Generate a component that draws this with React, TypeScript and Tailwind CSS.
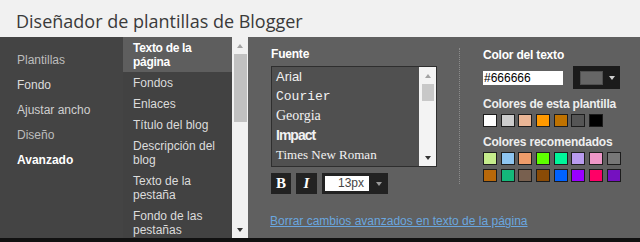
const templateColors = [
  "bg-[#ffffff]",
  "bg-[#cccccc]",
  "bg-[#eab696]",
  "bg-[#ff9900]",
  "bg-[#bf7200]",
  "bg-[#555555]",
  "bg-[#000000]",
];

const recRow1 = [
  "bg-[#c6ec8c]",
  "bg-[#8ec5f0]",
  "bg-[#ee9c6a]",
  "bg-[#5eff00]",
  "bg-[#00f59a]",
  "bg-[#b99bee]",
  "bg-[#ef97c8]",
  "bg-[#777777]",
];

const recRow2 = [
  "bg-[#b8680a]",
  "bg-[#14b87a]",
  "bg-[#78604f]",
  "bg-[#8a4b06]",
  "bg-[#0062ff]",
  "bg-[#9a00ff]",
  "bg-[#ff0066]",
  "bg-[#7511c0]",
];

function Swatch({ c }: { c: string }) {
  return <div className={`w-[14px] h-[13px] border border-[#1c1c1c] ${c}`} />;
}

function UpArrow({ color }: { color: string }) {
  return (
    <div
      className={`w-0 h-0 border-x-[3.5px] border-x-transparent border-b-[4px] ${color}`}
    />
  );
}

function DownArrow({ color }: { color: string }) {
  return (
    <div
      className={`w-0 h-0 border-x-[3.5px] border-x-transparent border-t-[4px] ${color}`}
    />
  );
}

export default function App() {
  const nav = [
    { t: "Plantillas", c: "text-[#bdbdbd]" },
    { t: "Fondo", c: "text-[#dddddd]" },
    { t: "Ajustar ancho", c: "text-[#cfcfcf]" },
    { t: "Diseño", c: "text-[#bdbdbd]" },
  ];
  const sub = [
    ["Fondos"],
    ["Enlaces"],
    ["Título del blog"],
    ["Descripción del", "blog"],
    ["Texto de la", "pestaña"],
    ["Fondo de las", "pestañas"],
  ];
  return (
    <div className="w-[640px] h-[242px] flex flex-col overflow-hidden font-['Liberation_Sans',Arial,sans-serif] text-[12px]">
      <header className="h-[37px] shrink-0 bg-[#f1f1f1] flex items-center pl-[16px] pt-[4px]">
        <h1 className="font-['Open_Sans',sans-serif] text-[18px] text-[#3a3a3a] leading-none">
          Diseñador de plantillas de Blogger
        </h1>
      </header>

      <div className="flex h-[201px] shrink-0">
        {/* left nav */}
        <nav className="w-[123px] shrink-0 bg-[#444444] pt-[10px] pl-[17px]">
          {nav.map((n) => (
            <div key={n.t} className={`h-[25px] flex items-center ${n.c}`}>
              {n.t}
            </div>
          ))}
          <div className="h-[25px] flex items-center text-white font-bold">Avanzado</div>
        </nav>

        {/* sub nav */}
        <div className="w-[109px] shrink-0 bg-[#424242] flex flex-col overflow-hidden">
          <div className="bg-[#5e5e5e] pl-[10px] py-[3.5px] leading-[14px] text-white font-bold tracking-[-0.3px]">
            <div>Texto de la</div>
            <div>página</div>
          </div>
          {sub.map((s) => (
            <div key={s.join()} className="pl-[10px] py-[3.5px] leading-[14px] text-[#dcdcdc]">
              {s.map((l) => (
                <div key={l}>{l}</div>
              ))}
            </div>
          ))}
        </div>

        {/* scrollbar */}
        <div className="w-[16px] shrink-0 bg-[#f1f1f1] flex flex-col items-center">
          <div className="h-[17px] w-full flex items-center justify-center">
            <UpArrow color="border-b-[#a3a3a3]" />
          </div>
          <div className="w-[13px] h-[68px] bg-[#c1c1c1]" />
          <div className="flex-1" />
          <div className="h-[17px] w-full flex items-center justify-center">
            <DownArrow color="border-t-[#333333]" />
          </div>
        </div>

        {/* right panel */}
        <main className="flex-1 bg-[#606060] pt-[10px] pl-[23px] flex flex-col">
          <div className="flex">
            {/* font section */}
            <div className="w-[166px] shrink-0 flex flex-col">
              <div className="leading-[14px] text-white font-bold tracking-[-0.2px]">Fuente</div>
              <div className="mt-[5px] h-[101px] border border-[#2e2e2e] bg-[#505050] flex">
                <div className="flex-1 pl-[4px] text-[#f2f2f2] text-[13px]">
                  <div className="h-[19.6px] flex items-center font-['Liberation_Sans',Arial,sans-serif]">Arial</div>
                  <div className="h-[19.6px] flex items-center font-['Liberation_Mono','Courier_New',monospace]">Courier</div>
                  <div className="h-[19.6px] flex items-center font-['Liberation_Serif',Georgia,serif] text-[14px]">Georgia</div>
                  <div className="h-[19.6px] flex items-center font-['Liberation_Sans',Arial,sans-serif] font-bold text-[14px] tracking-[-1px]">Impact</div>
                  <div className="h-[19.6px] flex items-center font-['Liberation_Serif','Times_New_Roman',serif]">Times New Roman</div>
                </div>
                <div className="w-[17px] bg-[#f3f3f3] flex flex-col items-center">
                  <div className="h-[17px] w-full flex items-center justify-center">
                    <UpArrow color="border-b-[#a3a3a3]" />
                  </div>
                  <div className="w-[12px] h-[17px] bg-[#c8c8c8]" />
                  <div className="flex-1" />
                  <div className="h-[17px] w-full flex items-center justify-center">
                    <DownArrow color="border-t-[#333333]" />
                  </div>
                </div>
              </div>
              <div className="mt-[6px] flex gap-[5px] h-[21px]">
                <div className="w-[20px] h-[21px] bg-[#222222] flex items-center justify-center text-white font-['Liberation_Serif',serif] font-bold text-[15px]">
                  B
                </div>
                <div className="w-[21px] h-[21px] bg-[#222222] flex items-center justify-center text-white font-['Liberation_Serif',serif] font-bold italic text-[15px]">
                  I
                </div>
                <div className="w-[66px] h-[21px] bg-[#222222] flex items-center pl-[3px]">
                  <div className="w-[44px] h-[15px] bg-white text-[#444444] text-[12px] leading-[15px] text-right pr-[5px]">
                    13px
                  </div>
                  <div className="flex-1 flex items-center justify-center">
                    <DownArrow color="border-t-[#9a9a9a]" />
                  </div>
                </div>
              </div>
            </div>

            {/* divider */}
            <div className="ml-[22px] mt-[1px] h-[136px] border-l border-dotted border-[#8c8c8c]" />

            {/* color section */}
            <div className="ml-[23px] mt-[1px] flex flex-col">
              <div className="leading-[14px] text-white font-bold tracking-[-0.2px]">Color del texto</div>
              <div className="mt-[4px] flex items-center">
                <div className="w-[80px] h-[14px] bg-white text-black leading-[14px] pl-[1px]">#666666</div>
                <div className="ml-[10px] w-[47px] h-[23px] bg-[#1b1b1b] flex items-center pl-[7px]">
                  <div className="w-[23px] h-[14px] bg-[#666666] border border-[#505050]" />
                  <div className="flex-1 flex items-center justify-center">
                    <DownArrow color="border-t-[#d0d0d0]" />
                  </div>
                </div>
              </div>
              <div className="mt-[8px] leading-[14px] text-[#eeeeee] font-bold tracking-[-0.2px]">
                Colores de esta plantilla
              </div>
              <div className="mt-[3px] flex gap-[3.7px]">
                {templateColors.map((c) => (
                  <Swatch key={c} c={c} />
                ))}
              </div>
              <div className="mt-[8px] leading-[14px] text-[#eeeeee] font-bold tracking-[-0.2px]">
                Colores recomendados
              </div>
              <div className="mt-[3px] flex gap-[3.7px]">
                {recRow1.map((c) => (
                  <Swatch key={c} c={c} />
                ))}
              </div>
              <div className="mt-[3.6px] flex gap-[3.7px]">
                {recRow2.map((c) => (
                  <Swatch key={c} c={c} />
                ))}
              </div>
            </div>
          </div>

          <a className="mt-[20px] -ml-[1px] leading-[14px] text-[#6aa6df] underline whitespace-nowrap cursor-pointer">
            Borrar cambios avanzados en texto de la página
          </a>
        </main>
      </div>
      <div className="flex-1 bg-[#111111]" />
    </div>
  );
}
